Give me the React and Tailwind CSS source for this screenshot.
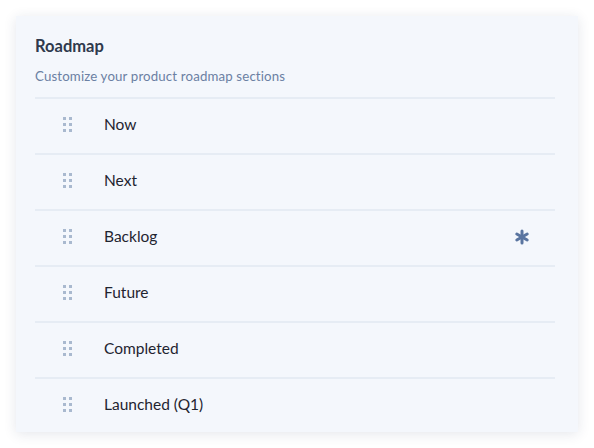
import { Asterisk } from 'lucide-react';

const sections = [
  { name: 'Now' },
  { name: 'Next' },
  { name: 'Backlog', flagged: true },
  { name: 'Future' },
  { name: 'Completed' },
  { name: 'Launched (Q1)' },
];

const DragHandle = () => (
  <div className="grid grid-cols-2 gap-x-[3px] gap-y-[3px] w-[9px]">
    {[0, 1, 2, 3, 4, 5].map((i) => (
      <span key={i} className="block w-[3px] h-[3px] bg-[#a9b9cf]" />
    ))}
  </div>
);

const App = () => {
  return (
    <div
      className="w-[594px] h-[448px] bg-white p-4"
      style={{ fontFamily: 'Lato, "Noto Sans", sans-serif' }}
    >
      <div className="w-[562px] h-[416px] overflow-hidden bg-[#f4f7fc] shadow-[0_2px_12px_rgba(30,50,90,0.12)] pl-[19px] pr-[23px]">
        {/* Header */}
        <div className="pt-[20px]">
          <h2 className="text-[16.5px] leading-5 font-bold text-[#2f3a4d]">Roadmap</h2>
          <p className="mt-3 text-[13.25px] leading-4 tracking-[0.15px] text-[#6b80a3]">
            Customize your product roadmap sections
          </p>
        </div>

        {/* Sections */}
        <div className="mt-[13px]">
          {sections.map((s) => (
            <div
              key={s.name}
              className="h-14 border-t-2 border-[#e6ecf4] flex items-center pb-[3px]"
            >
              <div className="w-[69px] pl-[28px]">
                <DragHandle />
              </div>
              <span className="flex-1 text-[15.5px] text-[#1f2430]">{s.name}</span>
              {s.flagged && (
                <Asterisk size={24} strokeWidth={3} className="text-[#5a75a0] mr-[21px] -my-2" />
              )}
            </div>
          ))}
        </div>
      </div>
    </div>
  );
};

export default App;
